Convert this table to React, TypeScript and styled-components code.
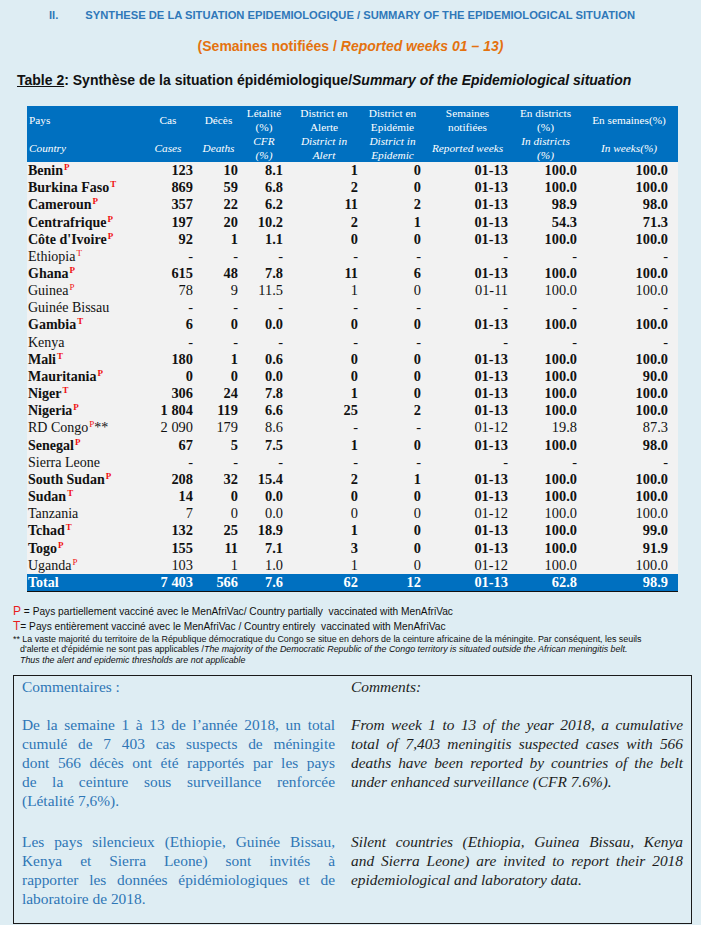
import React from 'react';
import styled, { createGlobalStyle } from 'styled-components';

const GlobalStyle = createGlobalStyle`
  body {
    margin: 0;
    background: #deedf3;
    font-family: "Liberation Serif", serif;
    color: #111;
  }
`;

const NARROW = `"Liberation Sans Narrow", "Liberation Sans", sans-serif`;
const SERIF = `"Liberation Serif", "DejaVu Serif", serif`;

const Page = styled.div`
  width: 701px;
  min-height: 925px;
  padding-top: 8px;
  box-sizing: border-box;
`;

const SectionHeading = styled.h2`
  margin: 0;
  padding-left: 49px;
  display: flex;
  gap: 27px;
  font-family: ${NARROW};
  font-size: 11.2px;
  line-height: 14px;
  font-weight: bold;
  color: #2f78b9;
`;

const Weeks = styled.div`
  margin-top: 15px;
  text-align: center;
  font-family: ${NARROW};
  font-size: 14px;
  line-height: 18px;
  font-weight: bold;
  color: #e4720f;
`;

const TableTitle = styled.div`
  margin-top: 16px;
  padding-left: 17px;
  font-family: ${NARROW};
  font-size: 14px;
  line-height: 18px;
  font-weight: bold;
  color: #111;
`;

const Underlined = styled.span`
  text-decoration: underline;
`;

const Table = styled.table`
  margin: 17px 0 0 27px;
  width: 651px;
  border-collapse: collapse;
  table-layout: fixed;
  font-family: ${SERIF};
`;

const HeadCell = styled.th`
  background: #0070c0;
  color: #fff;
  padding: 0;
  font-weight: normal;
  font-size: 11.3px;
  vertical-align: top;
`;

const HeadStack = styled.div`
  display: grid;
  grid-template-rows: 28px 28px;
`;

const HeadPart = styled.div<{ $italic?: boolean; $left?: boolean }>`
  display: flex;
  align-items: center;
  justify-content: ${p => (p.$left ? 'flex-start' : 'center')};
  text-align: ${p => (p.$left ? 'left' : 'center')};
  padding-left: ${p => (p.$left ? '2px' : '0')};
  line-height: 14px;
  font-style: ${p => (p.$italic ? 'italic' : 'normal')};
`;

const BodyRow = styled.tr<{ $total?: boolean }>`
  height: 17.17px;
  background: ${p => (p.$total ? '#0070c0' : '#f2f2f2')};
  color: ${p => (p.$total ? '#fff' : '#111')};
  border-bottom: ${p => (p.$total ? '1.5px solid #111' : 'none')};
`;

const Cell = styled.td<{ $bold: boolean; $pad: number }>`
  padding: 0 ${p => p.$pad}px 0 0;
  text-align: right;
  font-size: 14.4px;
  line-height: 17px;
  font-weight: ${p => (p.$bold ? 'bold' : 'normal')};
  white-space: nowrap;
`;

const CountryCell = styled.td<{ $bold: boolean }>`
  padding: 0 0 0 1px;
  font-size: 14px;
  line-height: 17px;
  font-weight: ${p => (p.$bold ? 'bold' : 'normal')};
  white-space: nowrap;
`;

const Mark = styled.sup<{ $bold: boolean }>`
  color: #f01010;
  font-size: 9px;
  font-weight: ${p => (p.$bold ? 'bold' : 'normal')};
  line-height: 0;
  vertical-align: 5px;
  margin-left: 1px;
`;

const Notes = styled.div`
  margin-top: 12px;
  padding-left: 13px;
  font-family: ${NARROW};
  color: #111;
`;

const NoteLine = styled.div`
  font-size: 10.2px;
  line-height: 14px;
`;

const Key = styled.span`
  color: #e81c1c;
  font-size: 12px;
`;

const SmallNote = styled.div`
  padding-left: 7px;
  text-indent: -7px;
  font-size: 8.9px;
  line-height: 10.5px;
  white-space: nowrap;
`;

const CommentBox = styled.div`
  margin: 10px 9px 0 13px;
  border: 1px solid #1a1a1a;
  padding: 1px 8px 15px 8px;
  display: grid;
  grid-template-columns: 313px 332px;
  column-gap: 16px;
  row-gap: 19px;
  font-family: ${SERIF};
  font-size: 15.4px;
  line-height: 19px;
`;

const Block = styled.div<{ $en?: boolean; $spaced?: boolean }>`
  color: ${p => (p.$en ? '#1d1d1d' : '#2e76b6')};
  font-style: ${p => (p.$en ? 'italic' : 'normal')};
  margin-top: ${p => (p.$spaced ? '3px' : '0')};
`;

const JLine = styled.div<{ $last?: boolean }>`
  white-space: nowrap;
  text-align: ${p => (p.$last ? 'left' : 'justify')};
  text-align-last: ${p => (p.$last ? 'left' : 'justify')};
`;

type Col = { fr: React.ReactNode; en: React.ReactNode; width: number; pad: number };

const columns: Col[] = [
  { fr: 'Pays', en: 'Country', width: 113, pad: 0 },
  { fr: 'Cas', en: 'Cases', width: 56, pad: 3 },
  { fr: 'Décès', en: 'Deaths', width: 45, pad: 3 },
  { fr: <>Létalité<br />(%)</>, en: <>CFR<br />(%)</>, width: 46, pad: 4 },
  { fr: <>District en<br />Alerte</>, en: <>District in<br />Alert</>, width: 74, pad: 3 },
  { fr: <>District en<br />Epidémie</>, en: <>District in<br />Epidemic</>, width: 63, pad: 3 },
  { fr: <>Semaines<br />notifiées</>, en: 'Reported weeks', width: 87, pad: 3 },
  { fr: <>En districts<br />(%)</>, en: <>In districts<br />(%)</>, width: 69, pad: 3 },
  { fr: 'En semaines(%)', en: 'In weeks(%)', width: 98, pad: 10 },
];

type Row = { name: string; mark?: 'P' | 'T'; extra?: string; bold: boolean; v: string[] };

const dash = ['-', '-', '-', '-', '-', '-', '-', '-'];

const rows: Row[] = [
  { name: 'Benin', mark: 'P', bold: true, v: ['123', '10', '8.1', '1', '0', '01-13', '100.0', '100.0'] },
  { name: 'Burkina Faso', mark: 'T', bold: true, v: ['869', '59', '6.8', '2', '0', '01-13', '100.0', '100.0'] },
  { name: 'Cameroun', mark: 'P', bold: true, v: ['357', '22', '6.2', '11', '2', '01-13', '98.9', '98.0'] },
  { name: 'Centrafrique', mark: 'P', bold: true, v: ['197', '20', '10.2', '2', '1', '01-13', '54.3', '71.3'] },
  { name: "Côte d'Ivoire", mark: 'P', bold: true, v: ['92', '1', '1.1', '0', '0', '01-13', '100.0', '100.0'] },
  { name: 'Ethiopia', mark: 'T', bold: false, v: dash },
  { name: 'Ghana', mark: 'P', bold: true, v: ['615', '48', '7.8', '11', '6', '01-13', '100.0', '100.0'] },
  { name: 'Guinea', mark: 'P', bold: false, v: ['78', '9', '11.5', '1', '0', '01-11', '100.0', '100.0'] },
  { name: 'Guinée Bissau', bold: false, v: dash },
  { name: 'Gambia', mark: 'T', bold: true, v: ['6', '0', '0.0', '0', '0', '01-13', '100.0', '100.0'] },
  { name: 'Kenya', bold: false, v: dash },
  { name: 'Mali', mark: 'T', bold: true, v: ['180', '1', '0.6', '0', '0', '01-13', '100.0', '100.0'] },
  { name: 'Mauritania', mark: 'P', bold: true, v: ['0', '0', '0.0', '0', '0', '01-13', '100.0', '90.0'] },
  { name: 'Niger', mark: 'T', bold: true, v: ['306', '24', '7.8', '1', '0', '01-13', '100.0', '100.0'] },
  { name: 'Nigeria', mark: 'P', bold: true, v: ['1 804', '119', '6.6', '25', '2', '01-13', '100.0', '100.0'] },
  { name: 'RD Congo', mark: 'P', extra: '**', bold: false, v: ['2 090', '179', '8.6', '-', '-', '01-12', '19.8', '87.3'] },
  { name: 'Senegal', mark: 'P', bold: true, v: ['67', '5', '7.5', '1', '0', '01-13', '100.0', '98.0'] },
  { name: 'Sierra Leone', bold: false, v: dash },
  { name: 'South Sudan', mark: 'P', bold: true, v: ['208', '32', '15.4', '2', '1', '01-13', '100.0', '100.0'] },
  { name: 'Sudan', mark: 'T', bold: true, v: ['14', '0', '0.0', '0', '0', '01-13', '100.0', '100.0'] },
  { name: 'Tanzania', bold: false, v: ['7', '0', '0.0', '0', '0', '01-12', '100.0', '100.0'] },
  { name: 'Tchad', mark: 'T', bold: true, v: ['132', '25', '18.9', '1', '0', '01-13', '100.0', '99.0'] },
  { name: 'Togo', mark: 'P', bold: true, v: ['155', '11', '7.1', '3', '0', '01-13', '100.0', '91.9'] },
  { name: 'Uganda', mark: 'P', bold: false, v: ['103', '1', '1.0', '1', '0', '01-12', '100.0', '100.0'] },
];

const total = ['7 403', '566', '7.6', '62', '12', '01-13', '62.8', '98.9'];

const frLines = [
  ['De la semaine 1 à 13 de l’année 2018, un total', 'cumulé de 7 403 cas suspects de méningite', 'dont 566 décès ont été rapportés par les pays', 'de la ceinture sous surveillance renforcée', '(Létalité 7,6%).'],
  ['Les pays silencieux (Ethiopie, Guinée Bissau,', 'Kenya et Sierra Leone) sont invités à', 'rapporter les données épidémiologiques et de', 'laboratoire de 2018.'],
];

const enLines = [
  ['From week 1 to 13 of the year 2018, a cumulative', 'total of 7,403 meningitis suspected cases with 566', 'deaths have been reported by countries of the belt', 'under enhanced surveillance (CFR 7.6%).'],
  ['Silent countries (Ethiopia, Guinea Bissau, Kenya', 'and Sierra Leone) are invited to report their 2018', 'epidemiological and laboratory data.'],
];

function Paragraph({ lines, en, spaced }: { lines: string[]; en?: boolean; spaced?: boolean }) {
  return (
    <Block $en={en} $spaced={spaced}>
      {lines.map((l, i) => (
        <JLine key={i} $last={i === lines.length - 1}>{l}</JLine>
      ))}
    </Block>
  );
}

export default function App() {
  return (
    <Page>
      <GlobalStyle />
      <SectionHeading>
        <span>II.</span>
        <span>SYNTHESE DE LA SITUATION EPIDEMIOLOGIQUE / SUMMARY OF THE EPIDEMIOLOGICAL SITUATION</span>
      </SectionHeading>

      <Weeks>
        (Semaines notifiées / <i>Reported weeks 01 – 13)</i>
      </Weeks>

      <TableTitle>
        <Underlined>Table 2</Underlined>: Synthèse de la situation épidémiologique/<i>Summary of the Epidemiological situation</i>
      </TableTitle>

      <Table>
        <colgroup>
          {columns.map((c, i) => <col key={i} style={{ width: c.width }} />)}
        </colgroup>
        <thead>
          <tr>
            {columns.map((c, i) => (
              <HeadCell key={i}>
                <HeadStack>
                  <HeadPart $left={i === 0}>{c.fr}</HeadPart>
                  <HeadPart $left={i === 0} $italic>{c.en}</HeadPart>
                </HeadStack>
              </HeadCell>
            ))}
          </tr>
        </thead>
        <tbody>
          {rows.map(r => (
            <BodyRow key={r.name}>
              <CountryCell $bold={r.bold}>
                {r.name}
                {r.mark && <Mark $bold={r.bold}>{r.mark}</Mark>}
                {r.extra}
              </CountryCell>
              {r.v.map((val, i) => (
                <Cell key={i} $bold={r.bold} $pad={columns[i + 1].pad}>{val}</Cell>
              ))}
            </BodyRow>
          ))}
          <BodyRow $total>
            <CountryCell $bold>Total</CountryCell>
            {total.map((val, i) => (
              <Cell key={i} $bold $pad={columns[i + 1].pad}>{val}</Cell>
            ))}
          </BodyRow>
        </tbody>
      </Table>

      <Notes>
        <NoteLine><Key>P</Key> = Pays partiellement vacciné avec le MenAfriVac/ Country partially&nbsp; vaccinated with MenAfriVac</NoteLine>
        <NoteLine><Key>T</Key>= Pays entièrement vacciné avec le MenAfriVac / Country entirely&nbsp; vaccinated with MenAfriVac</NoteLine>
        <SmallNote>
          ** La vaste majorité du territoire de la République démocratique du Congo se situe en dehors de la ceinture africaine de la méningite. Par conséquent, les seuils<br />
          d'alerte et d'épidémie ne sont pas applicables /<i>The majority of the Democratic Republic of the Congo territory is situated outside the African meningitis belt.</i><br />
          <i>Thus the alert and epidemic thresholds are not applicable</i>
        </SmallNote>
      </Notes>

      <CommentBox>
        <Block>Commentaires :</Block>
        <Block $en>Comments:</Block>
        <Paragraph lines={frLines[0]} />
        <Paragraph lines={enLines[0]} en />
        <Paragraph lines={frLines[1]} spaced />
        <Paragraph lines={enLines[1]} en spaced />
      </CommentBox>
    </Page>
  );
}
